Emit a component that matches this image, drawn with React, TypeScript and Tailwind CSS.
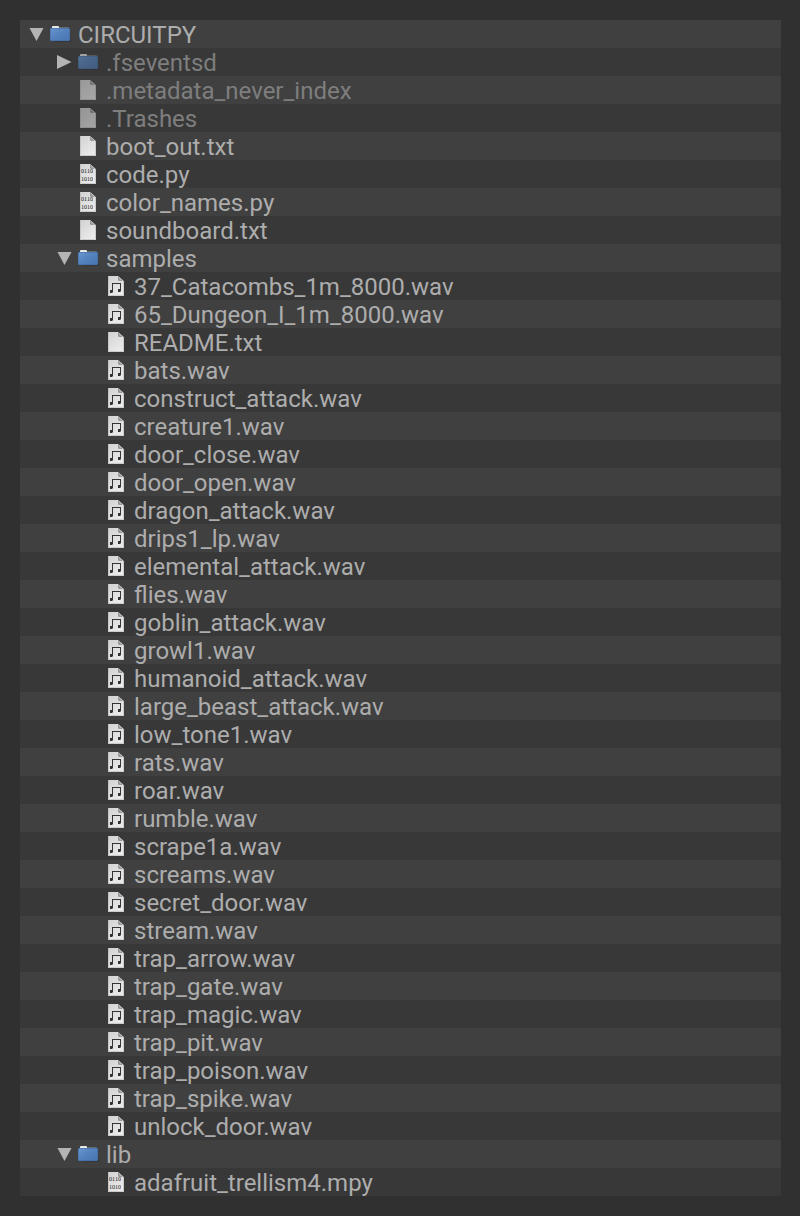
import { useState } from "react";

type Kind = "folder" | "text" | "binary" | "audio";

interface Entry {
  name: string;
  kind: Kind;
  hidden?: boolean;
  children?: Entry[];
}

const audio = (name: string): Entry => ({ name, kind: "audio" });

const ROOT: Entry = {
  name: "CIRCUITPY",
  kind: "folder",
  children: [
    { name: ".fseventsd", kind: "folder", hidden: true, children: [] },
    { name: ".metadata_never_index", kind: "text", hidden: true },
    { name: ".Trashes", kind: "text", hidden: true },
    { name: "boot_out.txt", kind: "text" },
    { name: "code.py", kind: "binary" },
    { name: "color_names.py", kind: "binary" },
    { name: "soundboard.txt", kind: "text" },
    {
      name: "samples",
      kind: "folder",
      children: [
        audio("37_Catacombs_1m_8000.wav"),
        audio("65_Dungeon_I_1m_8000.wav"),
        { name: "README.txt", kind: "text" },
        audio("bats.wav"),
        audio("construct_attack.wav"),
        audio("creature1.wav"),
        audio("door_close.wav"),
        audio("door_open.wav"),
        audio("dragon_attack.wav"),
        audio("drips1_lp.wav"),
        audio("elemental_attack.wav"),
        audio("flies.wav"),
        audio("goblin_attack.wav"),
        audio("growl1.wav"),
        audio("humanoid_attack.wav"),
        audio("large_beast_attack.wav"),
        audio("low_tone1.wav"),
        audio("rats.wav"),
        audio("roar.wav"),
        audio("rumble.wav"),
        audio("scrape1a.wav"),
        audio("screams.wav"),
        audio("secret_door.wav"),
        audio("stream.wav"),
        audio("trap_arrow.wav"),
        audio("trap_gate.wav"),
        audio("trap_magic.wav"),
        audio("trap_pit.wav"),
        audio("trap_poison.wav"),
        audio("trap_spike.wav"),
        audio("unlock_door.wav"),
      ],
    },
    {
      name: "lib",
      kind: "folder",
      children: [{ name: "adafruit_trellism4.mpy", kind: "binary" }],
    },
  ],
};

const INDENT = ["pl-2", "pl-9", "pl-16"];

function Gradients() {
  return (
    <svg className="absolute size-0" aria-hidden="true">
      <defs>
        <linearGradient id="folder-fill" x1="0" y1="0" x2="1" y2="1">
          <stop offset="0" stopColor="#6795d0" />
          <stop offset="0.5" stopColor="#5281bd" />
          <stop offset="1" stopColor="#4876b0" />
        </linearGradient>
        <linearGradient id="page-fill" x1="0" y1="0" x2="0.6" y2="1">
          <stop offset="0" stopColor="#d2d2d2" />
          <stop offset="1" stopColor="#eaeaea" />
        </linearGradient>
      </defs>
    </svg>
  );
}

function FolderIcon() {
  return (
    <svg viewBox="0 0 21 20" className="h-5 w-[21px]" aria-hidden="true">
      <path d="M5 15.5h16v2H5z" fill="#252b36" opacity="0.7" />
      <path d="M8 5V3h10q1 0 1 1v1z" fill="#686d70" />
      <path d="M2 5V3q0-1 1-1h5q1 0 1 1v2z" fill="#e9e9e5" />
      <rect x="0" y="4" width="20" height="13" rx="1" fill="#40689a" />
      <rect x="0.5" y="4.5" width="19" height="12" rx="1" fill="url(#folder-fill)" />
    </svg>
  );
}

function PageIcon({ kind }: { kind: Kind }) {
  return (
    <svg viewBox="0 0 20 20" className="size-5" aria-hidden="true">
      <path d="M2 0h10l6 5.5V20H2z" fill="url(#page-fill)" />
      <path d="M2.5 0v19.5h15V5" fill="none" stroke="#b8b8b8" strokeOpacity="0.6" />
      <path d="M12 0v3.5q0 1.5 1.5 1.5H18z" fill="#969696" />
      <path d="M13 1.5l4 3.5" stroke="#c9c9c9" />
      {kind === "audio" && (
        <g fill="#333">
          <path d="M6 7h9v8h-1V8H7v8H6z" />
          <path d="M4 14h3v2l-1 1H4zM12 13h3v2l-1 1h-2z" />
        </g>
      )}
      {kind === "binary" && (
        <g
          fill="#000"
          opacity="0.9"
          fontSize="6"
          fontFamily="'Liberation Serif', serif"
          textAnchor="middle"
        >
          <text x="9" y="9">0110</text>
          <text x="9" y="17">1010</text>
        </g>
      )}
    </svg>
  );
}

interface Row {
  entry: Entry;
  depth: number;
  path: string;
}

function visibleRows(entry: Entry, open: Set<string>, depth = 0, parent = ""): Row[] {
  const path = `${parent}/${entry.name}`;
  const below = open.has(path)
    ? (entry.children ?? []).flatMap((child) => visibleRows(child, open, depth + 1, path))
    : [];
  return [{ entry, depth, path }, ...below];
}

export default function App() {
  const [open, setOpen] = useState(
    () => new Set(["/CIRCUITPY", "/CIRCUITPY/samples", "/CIRCUITPY/lib"]),
  );

  const toggle = (path: string) =>
    setOpen((current) => {
      const next = new Set(current);
      if (!next.delete(path)) next.add(path);
      return next;
    });

  return (
    <main className="min-h-screen bg-[#303030] py-5 pr-[19px] pl-5 font-['Roboto',sans-serif] text-2xl text-[#adadad]">
      <Gradients />
      <ul aria-label="Files">
        {visibleRows(ROOT, open).map(({ entry, depth, path }) => (
          <li
            key={path}
            className={`flex h-7 items-center odd:bg-[#404040] even:bg-[#383838] ${INDENT[depth]}`}
          >
            <span className="flex w-[22px] shrink-0">
              {entry.children && (
                <button
                  type="button"
                  aria-label={`Toggle ${entry.name}`}
                  aria-expanded={open.has(path)}
                  onClick={() => toggle(path)}
                  className="cursor-pointer"
                >
                  <svg viewBox="0 0 16 16" className="size-4" fill="#b4b4b4" aria-hidden="true">
                    <path d={open.has(path) ? "M1.5 2h14L8.5 15z" : "M1 1v14l14.5-7z"} />
                  </svg>
                </button>
              )}
            </span>
            <span className={`flex w-7 shrink-0 ${entry.hidden ? "opacity-60" : ""}`}>
              {entry.kind === "folder" ? <FolderIcon /> : <PageIcon kind={entry.kind} />}
            </span>
            <span
              className={`self-start leading-[30px] whitespace-nowrap ${entry.hidden ? "text-[#7e7e7e]" : ""}`}
            >
              {entry.name}
            </span>
          </li>
        ))}
      </ul>
    </main>
  );
}
